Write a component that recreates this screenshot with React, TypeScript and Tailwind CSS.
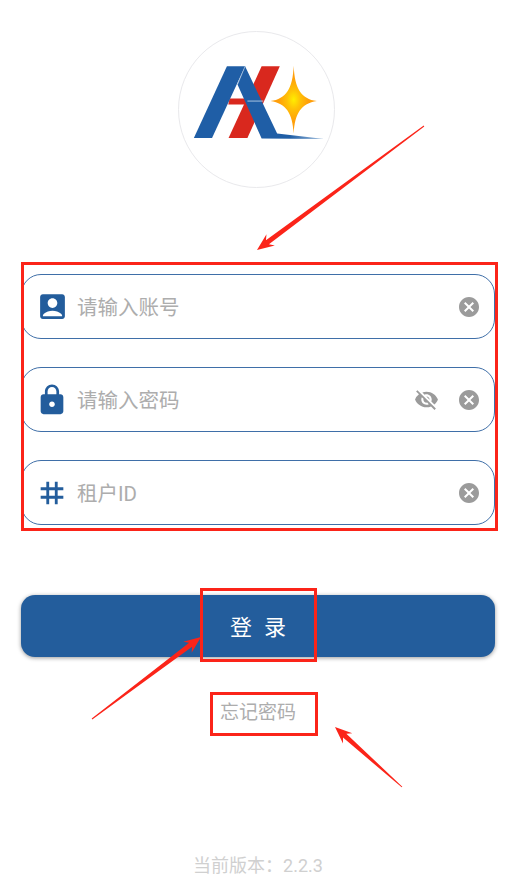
import type { ReactNode } from "react";
import { MdAccountBox, MdCancel, MdLock, MdTag, MdVisibilityOff } from "react-icons/md";

function Field({ icon, placeholder, extra }: { icon: ReactNode; placeholder: string; extra?: ReactNode }) {
  return (
    <div className="flex h-[65px] items-center rounded-[20px] border border-[#3f6fa8] bg-white pl-[13px] pr-[13px]">
      <div className="flex w-[34px] justify-center text-[#235d9c]">{icon}</div>
      <input
        readOnly
        placeholder={placeholder}
        className="ml-[8px] min-w-0 flex-1 bg-transparent pt-[3px] text-[20.5px] outline-none placeholder:text-[#adadad]"
      />
      {extra}
      <MdCancel size={24} className="text-[#9b9b9b]" />
    </div>
  );
}

function Logo() {
  return (
    <div className="ml-[157px] h-[157px] w-[157px] rounded-full border border-[#e9e9ec] bg-white">
      <svg viewBox="55 33 469 469" className="h-full w-full">
        <defs>
          <radialGradient id="star" cx="0.5" cy="0.5" r="0.32">
            <stop offset="0" stopColor="#ffee00" />
            <stop offset="0.45" stopColor="#ffc107" />
            <stop offset="1" stopColor="#ff9f0a" />
          </radialGradient>
          <linearGradient id="tail" x1="0" x2="1" y1="0" y2="0">
            <stop offset="0.6" stopColor="#1f5ea6" />
            <stop offset="1" stopColor="#a9c4e0" />
          </linearGradient>
        </defs>
        <polygon points="305,137 360,137 262,354 205,354" fill="#d9281e" />
        <polygon points="208,234 270,234 268,252 204,252" fill="#d9281e" />
        <polygon points="200,137 255,137 155,354 100,354" fill="#1f5ea6" />
        <polygon points="255,137 352,340 495,357 305,355 232,192" fill="url(#tail)" />
        <line x1="262" y1="242" x2="310" y2="242" stroke="#a9c4e0" strokeWidth="3" />
        <line x1="255" y1="137" x2="232" y2="192" stroke="#a9c4e0" strokeWidth="2" />
        <path
          d="M402 135 C405 205 425 235 472 242 C425 249 405 280 402 340 C399 280 379 249 332 242 C379 235 399 205 402 135Z"
          fill="url(#star)"
        />
      </svg>
    </div>
  );
}

const arrows = [
  { tail: [424, 126], tip: [257, 250] },
  { tail: [92, 719], tip: [201, 637] },
  { tail: [402, 787], tip: [335, 727] },
];

// tapered arrow: thin at the tail, barbed at the head
function arrowPoints(tail: number[], tip: number[]) {
  const dx = tip[0] - tail[0];
  const dy = tip[1] - tail[1];
  const len = Math.hypot(dx, dy);
  const ux = dx / len;
  const uy = dy / len;
  const at = (back: number, side: number) =>
    `${tip[0] - ux * back - uy * side},${tip[1] - uy * back + ux * side}`;
  return [
    at(len, 0.5),
    at(13, 2.5),
    at(17, 7),
    at(0, 0),
    at(17, -7),
    at(13, -2.5),
    at(len, -0.5),
  ].join(" ");
}

export default function App() {
  return (
    <div className="relative h-[885px] w-full overflow-hidden bg-white font-['Roboto','Noto_Sans_CJK_SC',sans-serif]">
      <div className="flex h-full flex-col px-[21px] pt-[31px]">
        <Logo />

        <div className="mt-[86px] flex flex-col gap-7">
          <Field icon={<MdAccountBox size={33} />} placeholder="请输入账号" />
          <Field
            icon={<MdLock size={34} />}
            placeholder="请输入密码"
            extra={<MdVisibilityOff size={25} className="mr-[18px] text-[#9b9b9b]" />}
          />
          <Field icon={<MdTag size={34} />} placeholder="租户ID" />
        </div>

        <button className="mt-[70px] flex h-[62px] items-center justify-center gap-3 rounded-[14px] bg-[#235d9c] pt-[3px] text-[22px] text-white shadow-[0_1px_4px_rgba(0,0,0,0.4)]">
          <span>登</span>
          <span>录</span>
        </button>

        <div className="mt-[43px] text-center text-[19px] leading-[26px] text-[#adadad]">忘记密码</div>

        <div className="mt-auto mb-[7px] text-center text-[18px] leading-[24px] text-[#d0d0d0]">当前版本：2.2.3</div>
      </div>

      {/* annotations drawn over the screenshot */}
      <div className="absolute left-[21px] top-[262px] h-[269px] w-[477px] border-[3px] border-[#fb2419]" />
      <div className="absolute left-[200px] top-[588px] h-[74px] w-[117px] border-[3px] border-[#fb2419]" />
      <div className="absolute left-[210px] top-[692px] h-[44px] w-[108px] border-[3px] border-[#fb2419]" />
      <svg className="pointer-events-none absolute left-0 top-0 h-[885px] w-[516px]" viewBox="0 0 516 885">
        {arrows.map((a) => (
          <polygon key={a.tail[0]} points={arrowPoints(a.tail, a.tip)} fill="#fb2419" />
        ))}
      </svg>
    </div>
  );
}
